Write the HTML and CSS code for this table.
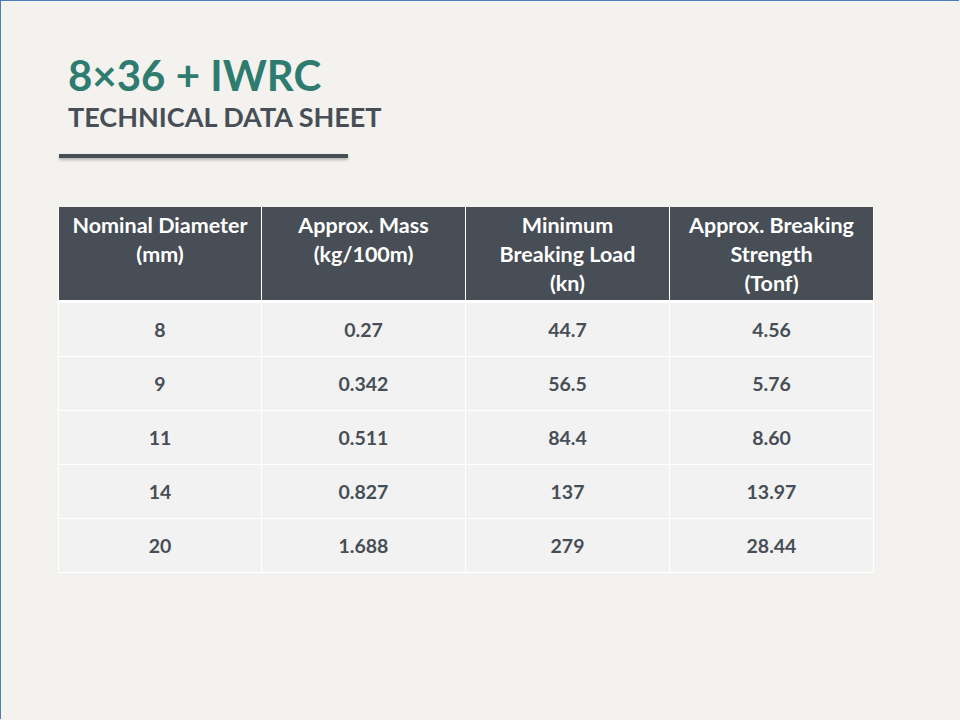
FILE: index.html
```html
<!DOCTYPE html>
<html lang="en">
<head>
<meta charset="utf-8">
<title>8×36 + IWRC Technical Data Sheet</title>
<link rel="stylesheet" href="styles.css">
</head>
<body>
<div class="slide">
  <header class="heading">
    <h1 class="title">8×36 + IWRC</h1>
    <h2 class="subtitle">TECHNICAL DATA SHEET</h2>
    <div class="rule"></div>
  </header>
  <table class="data">
    <colgroup>
      <col class="c1"><col class="c2"><col class="c3"><col class="c4">
    </colgroup>
    <thead>
      <tr>
        <th>Nominal Diameter<br>(mm)</th>
        <th>Approx. Mass<br>(kg/100m)</th>
        <th>Minimum<br>Breaking Load<br>(kn)</th>
        <th>Approx. Breaking<br>Strength<br>(Tonf)</th>
      </tr>
    </thead>
    <tbody>
      <tr><td>8</td><td>0.27</td><td>44.7</td><td>4.56</td></tr>
      <tr><td>9</td><td>0.342</td><td>56.5</td><td>5.76</td></tr>
      <tr><td>11</td><td>0.511</td><td>84.4</td><td>8.60</td></tr>
      <tr><td>14</td><td>0.827</td><td>137</td><td>13.97</td></tr>
      <tr><td>20</td><td>1.688</td><td>279</td><td>28.44</td></tr>
    </tbody>
  </table>
</div>
</body>
</html>
```
FILE: styles.css
```css
html, body {
  margin: 0;
  padding: 0;
}
body {
  background: #f3f2ee;
  font-family: Lato, "Open Sans", "Liberation Sans", sans-serif;
}
.slide {
  width: 959px;
  height: 719px;
  border-top: 1px solid #4a7ebb;
  border-left: 1px solid #4a7ebb;
  background: #f3f2ee;
  box-sizing: border-box;
  padding-top: 49px;
}
.heading {
  padding-left: 67px;
}
.title {
  margin: 0;
  font-size: 42px;
  line-height: 50px;
  font-weight: 700;
  color: #2e7b70;
}
.subtitle {
  margin: 0;
  font-size: 27px;
  line-height: 34px;
  font-weight: 700;
  color: #474e55;
}
.rule {
  margin: 20px 0 0 -9px;
  width: 289px;
  height: 4px;
  background: #474e55;
  box-shadow: 0 2px 3px rgba(0, 0, 0, 0.25);
}
.data {
  margin: 49px 0 0 57px;
  border-collapse: collapse;
  table-layout: fixed;
  width: 815px;
}
.c1 { width: 203px; }
.c2, .c3, .c4 { width: 204px; }
.data th,
.data td {
  text-align: center;
  font-weight: 700;
  padding: 0;
  border-left: 1px solid #ffffff;
  border-right: 1px solid #ffffff;
}
.data th {
  background: #474e55;
  color: #ffffff;
  font-size: 21.5px;
  line-height: 29px;
  height: 89px;
  padding-top: 4px;
  vertical-align: top;
  border-bottom: 1px solid #9ba0a5;
}
.data tbody tr:first-child td {
  border-top: 3px solid #ffffff;
}
.data td {
  background: #f2f2f2;
  color: #474e55;
  font-size: 19.5px;
  height: 53px;
  border-bottom: 1px solid #ffffff;
}
```
